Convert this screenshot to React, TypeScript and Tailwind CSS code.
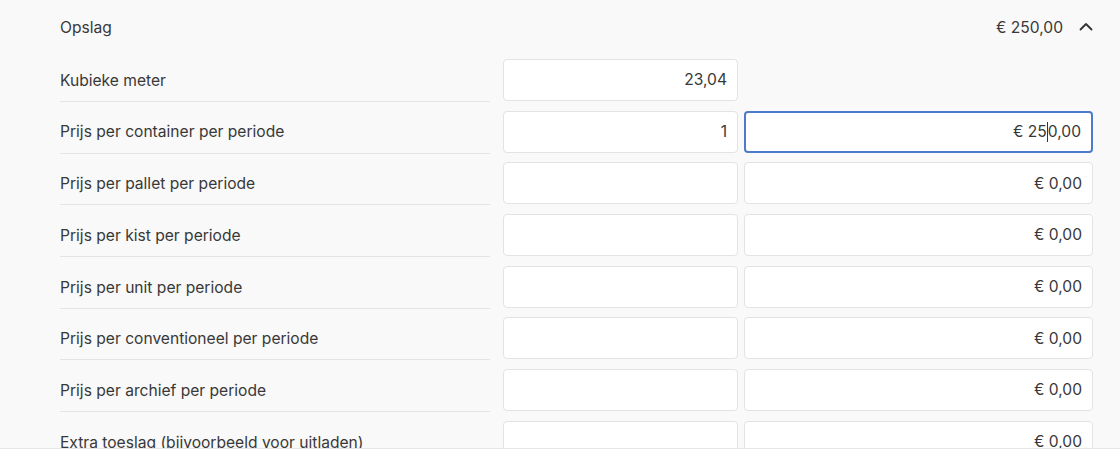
import React from "react";

const rows: { label: string; a: string; b: string | null; focus?: boolean }[] = [
  { label: "Kubieke meter", a: "23,04", b: null },
  { label: "Prijs per container per periode", a: "1", b: "€ 250,00", focus: true },
  { label: "Prijs per pallet per periode", a: "", b: "€ 0,00" },
  { label: "Prijs per kist per periode", a: "", b: "€ 0,00" },
  { label: "Prijs per unit per periode", a: "", b: "€ 0,00" },
  { label: "Prijs per conventioneel per periode", a: "", b: "€ 0,00" },
  { label: "Prijs per archief per periode", a: "", b: "€ 0,00" },
  { label: "Extra toeslag (bijvoorbeeld voor uitladen)", a: "", b: "€ 0,00" },
];

export default function App() {
  return (
    <div
      className="w-[1120px] h-[471px] flex flex-col bg-[#f9f9f9] text-[#383838] overflow-hidden"
      style={{ fontFamily: "Inter, 'Noto Sans', sans-serif" }}
    >
      <div className="h-[448px] overflow-hidden pl-[60px] pr-[27px]">
        <div className="h-[54px] flex items-center justify-between text-[15.6px] pt-[2px]">
          <span>Opslag</span>
          <div className="flex items-center gap-[16px]">
            <span>€ 250,00</span>
            <svg width="14" height="9" viewBox="0 0 14 9" fill="none" className="mb-[2px]">
              <path d="M1.5 7.5 L7 2 L12.5 7.5" stroke="#333" strokeWidth="1.8" strokeLinecap="round" strokeLinejoin="round" />
            </svg>
          </div>
        </div>
        <div className="pt-[5px] flex flex-col gap-[9.7px]">
          {rows.map((r, i) => (
            <div key={i} className="flex items-stretch h-[42px]">
              <div className="w-[430px] h-[43px] border-b border-[#e4e4e4] flex items-center text-[15.6px] pt-[1px]">
                {r.label}
              </div>
              <div className="ml-[13px] w-[235px] bg-white border border-[#e3e3e3] rounded-[4px] flex items-center justify-end pr-[10px] text-[15.6px]">
                {r.a}
              </div>
              {r.b !== null && (
                <div
                  className={
                    "ml-[6px] w-[349px] bg-white rounded-[4px] flex items-center justify-end pr-[10px] text-[15.6px] " +
                    (r.focus ? "border-2 border-[#4d7bcc]" : "border border-[#e3e3e3]")
                  }
                >
                  {r.focus ? (
                    <span className="flex items-center">
                      € 25<span className="inline-block w-px h-[20px] bg-[#333]" />0,00
                    </span>
                  ) : (
                    r.b
                  )}
                </div>
              )}
            </div>
          ))}
        </div>
      </div>
      <div className="flex-1 bg-white border-t border-[#e6e6e6]" />
    </div>
  );
}
